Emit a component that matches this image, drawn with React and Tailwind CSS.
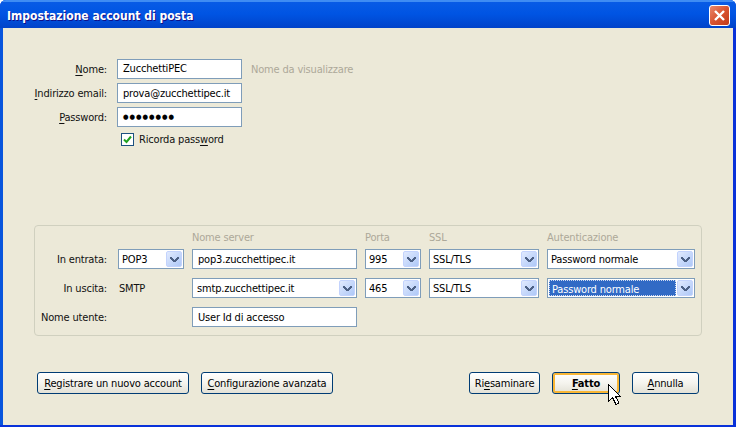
const F = "[font-family:'DejaVu_Sans_Condensed','Liberation_Sans',sans-serif]";

function Chevron() {
  return (
    <svg width="9" height="7" viewBox="0 0 9 7" shapeRendering="crispEdges">
      <path d="M0 1h2v1h1v1h1v1h1V3h1V2h1V1h2v2H8v1H7v1H6v1H3V5H2V4H1V3H0z" fill="#4D6185" />
    </svg>
  );
}

function Arrow() {
  return (
    <span className="flex w-[16px] shrink-0 items-center justify-center self-stretch rounded-[2px] border border-[#C3D3FD] bg-gradient-to-br from-[#E1EAFE] to-[#AEC8F7]">
      <Chevron />
    </span>
  );
}

function Select({ children, focused, className = "" }) {
  return (
    <div className={`flex h-[20px] items-stretch border border-[#7F9DB9] bg-white p-[1px] text-black ${className}`}>
      <span className={`flex-1 overflow-hidden whitespace-nowrap pl-[2px] leading-[17px] ${focused ? "mr-[1px] border border-dotted border-[#CEDAF2] bg-[#316AC5] pl-[1px] leading-[15px] text-white" : ""}`}>
        {children}
      </span>
      <Arrow />
    </div>
  );
}

function Input({ children, className = "" }) {
  return (
    <div className={`flex h-[20px] items-center overflow-hidden whitespace-nowrap border border-[#7F9DB9] bg-white pl-[5px] text-black ${className}`}>
      {children}
    </div>
  );
}

function Button({ children, className = "" }) {
  return (
    <button className={`flex h-[22px] items-center justify-center rounded-[3px] border border-[#003C74] bg-gradient-to-b from-white via-[#F5F4EE] to-[#E3E1D6] text-black ${className}`}>
      {children}
    </button>
  );
}

function Cursor() {
  return (
    <svg className="absolute left-[55px] top-[11px]" width="15" height="23" viewBox="0 0 15 23" shapeRendering="crispEdges">
      <path d="M1.5 1.5V18.5L5.5 14.5L9 21.5L12 20L8.5 13.5H13.5Z" fill="white" stroke="black" strokeWidth="1" />
    </svg>
  );
}

function CloseButton() {
  return (
    <div className="flex h-[21px] w-[21px] items-center justify-center rounded-[3px] border border-white bg-gradient-to-br from-[#E8866A] via-[#D9532F] to-[#C23A17]">
      <svg width="13" height="13" viewBox="0 0 13 13">
        <path d="M2 2L11 11M11 2L2 11" stroke="white" strokeWidth="2.4" />
      </svg>
    </div>
  );
}

function U({ children }) {
  return <span className="underline underline-offset-[2px]">{children}</span>;
}

const Head = "-mb-[4px] self-end whitespace-nowrap text-[#ACA899]";
const Label = "whitespace-nowrap pr-[3px] text-right";

export default function App() {
  return (
    <div className={`flex h-[427px] w-[736px] flex-col overflow-hidden rounded-t-[6px] bg-[#0831D9] text-[11px] leading-[13px] tracking-[-0.18px] text-[#111] ${F}`}>
      <div className="flex h-[28px] shrink-0 items-center justify-between bg-gradient-to-b from-[#0A5CE6] via-[#0054E3] to-[#0143C9] pl-[7px] pr-[6px] pt-[3px] shadow-[inset_0_2px_0_#3F8CF3]">
        <span className="mt-[2px] text-[12px] font-bold tracking-normal text-white [font-family:'DejaVu_Sans_Condensed','DejaVu_Sans',sans-serif] [text-shadow:1px_1px_0_#0F1089]">
          Impostazione account di posta
        </span>
        <CloseButton />
      </div>

      <div className="mb-[2px] flex min-h-0 flex-1 flex-col border-l-[3px] border-r-[3px] border-l-[#0855DD] border-r-[#0831D9] bg-[#ECE9D8] pl-[31px] pr-[31px]">
        <div className="flex flex-col gap-[4px] pt-[31px]">
          <div className="flex items-center">
            <span className="w-[73px] whitespace-nowrap text-right"><U>N</U>ome:</span>
            <Input className="ml-[10px] w-[125px] pb-[1px]">ZucchettiPEC</Input>
            <span className="ml-[9px] whitespace-nowrap text-[#ACA899]">Nome da visualizzare</span>
          </div>
          <div className="flex items-center">
            <span className="w-[73px] whitespace-nowrap text-right"><U>I</U>ndirizzo email:</span>
            <Input className="ml-[10px] w-[125px]">prova@zucchettipec.it</Input>
          </div>
          <div className="flex items-center">
            <span className="w-[73px] whitespace-nowrap text-right"><U>P</U>assword:</span>
            <Input className="ml-[10px] w-[125px] text-[7px] tracking-[1px]">●●●●●●●●</Input>
          </div>
          <label className="ml-[87px] mt-[2px] flex items-center gap-[5px]">
            <span className="flex h-[13px] w-[13px] items-center justify-center border border-[#1C5180] bg-white">
              <svg width="9" height="9" viewBox="0 0 9 9">
                <path d="M1 4.5L3.5 7L8 1.5" fill="none" stroke="#21A121" strokeWidth="2" />
              </svg>
            </span>
            <span>Ricorda pass<U>w</U>ord</span>
          </label>
        </div>

        <div className="mt-[79px] grid h-[111px] shrink-0 grid-cols-[75px_66px_165px_56px_110px_148px] grid-rows-[10px_20px_20px_20px] content-start items-center gap-x-[8px] gap-y-[9px] rounded-[4px] border border-[#D0D0BF] pr-[6px] pt-[4px]">
          <span />
          <span />
          <span className={Head}>Nome server</span>
          <span className={Head}>Porta</span>
          <span className={Head}>SSL</span>
          <span className={Head}>Autenticazione</span>

          <span className={Label}>In entrata:</span>
          <Select>POP3</Select>
          <Input>pop3.zucchettipec.it</Input>
          <Select>995</Select>
          <Select>SSL/TLS</Select>
          <Select>Password normale</Select>

          <span className={Label}>In uscita:</span>
          <span className="pl-[1px]">SMTP</span>
          <Select className="[&>span:first-child]:pl-[3px]">smtp.zucchettipec.it</Select>
          <Select>465</Select>
          <Select>SSL/TLS</Select>
          <Select focused>Password normale</Select>

          <span className={Label}>Nome utente:</span>
          <span />
          <Input>User Id di accesso</Input>
        </div>

        <div className="mt-[36px] flex items-start pl-[3px]">
          <Button className="w-[152px]"><span><U>R</U>egistrare un nuovo account</span></Button>
          <Button className="ml-[12px] w-[132px]"><span><U>C</U>onfigurazione avanzata</span></Button>
          <Button className="ml-[136px] w-[71px]"><span>Ri<U>e</U>saminare</span></Button>
          <div className="relative ml-[12px]">
            <Button className="w-[68px] font-bold shadow-[inset_0_0_0_2px_#F8B636]"><span><U>F</U>atto</span></Button>
            <Cursor />
          </div>
          <Button className="ml-[12px] w-[67px]"><span><U>A</U>nnulla</span></Button>
        </div>
      </div>
    </div>
  );
}
